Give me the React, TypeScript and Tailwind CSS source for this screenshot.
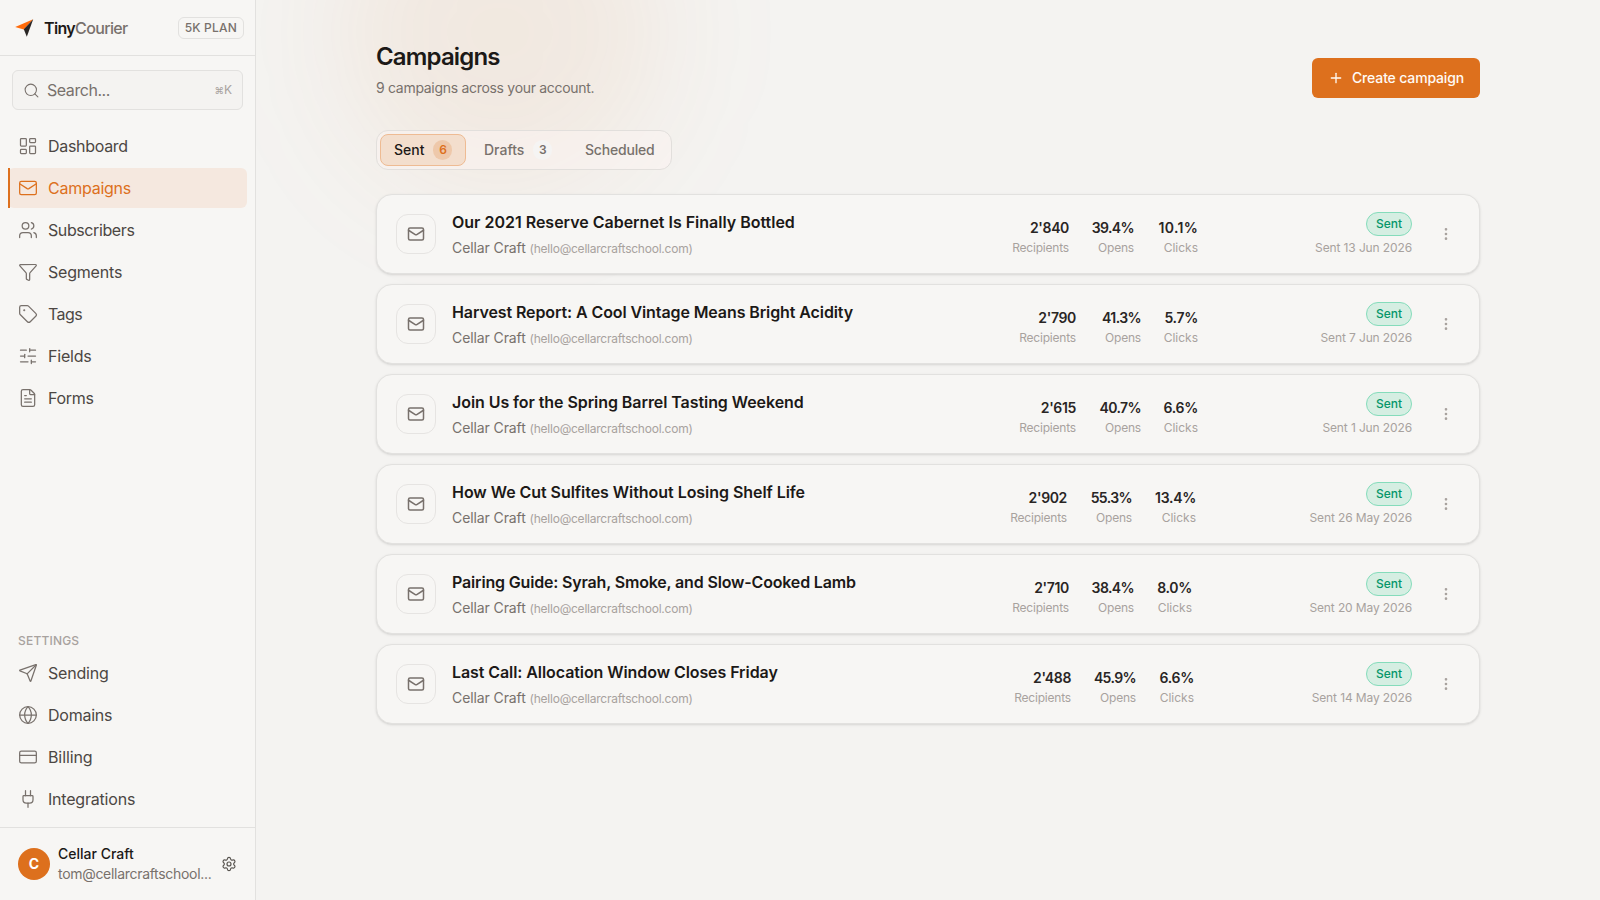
import {
  CreditCard,
  EllipsisVertical,
  FileText,
  Funnel,
  Globe,
  LayoutDashboard,
  Mail,
  Plug,
  Plus,
  Search,
  Send,
  Settings,
  SlidersHorizontal,
  Tag,
  Users,
  type LucideIcon,
} from "lucide-react";
import clsx from "clsx";

type NavEntry = {
  label: string;
  icon: LucideIcon;
  tracking: string;
  active?: boolean;
};

const mainNav: NavEntry[] = [
  { label: "Dashboard", icon: LayoutDashboard, tracking: "tracking-[-0.3px]" },
  { label: "Campaigns", icon: Mail, tracking: "tracking-[-0.25px]", active: true },
  { label: "Subscribers", icon: Users, tracking: "tracking-[-0.4px]" },
  { label: "Segments", icon: Funnel, tracking: "tracking-[-0.2px]" },
  { label: "Tags", icon: Tag, tracking: "tracking-[-0.6px]" },
  { label: "Fields", icon: SlidersHorizontal, tracking: "tracking-[-0.2px]" },
  { label: "Forms", icon: FileText, tracking: "tracking-[-0.3px]" },
];

const settingsNav: NavEntry[] = [
  { label: "Sending", icon: Send, tracking: "tracking-[-0.2px]" },
  { label: "Domains", icon: Globe, tracking: "tracking-[-0.25px]" },
  { label: "Billing", icon: CreditCard, tracking: "tracking-[-0.1px]" },
  { label: "Integrations", icon: Plug, tracking: "tracking-[-0.2px]" },
];

// clicksWidth and gap are in px; gap is the room between the stats and the status column
const campaigns = [
  { title: "Our 2021 Reserve Cabernet Is Finally Bottled", tracking: "tracking-[-0.01px]", recipients: "2'840", opens: "39.4%", clicks: "10.1%", clicksWidth: 40, gap: 104, date: "Sent 13 Jun 2026" },
  { title: "Harvest Report: A Cool Vintage Means Bright Acidity", tracking: "tracking-[-0.1px]", recipients: "2'790", opens: "41.3%", clicks: "5.7%", clicksWidth: 33, gap: 104, date: "Sent 7 Jun 2026" },
  { title: "Join Us for the Spring Barrel Tasting Weekend", tracking: "tracking-[-0.07px]", recipients: "2'615", opens: "40.7%", clicks: "6.6%", clicksWidth: 33, gap: 104, date: "Sent 1 Jun 2026" },
  { title: "How We Cut Sulfites Without Losing Shelf Life", tracking: "tracking-[-0.05px]", recipients: "2'902", opens: "55.3%", clicks: "13.4%", clicksWidth: 40, gap: 106, date: "Sent 26 May 2026" },
  { title: "Pairing Guide: Syrah, Smoke, and Slow-Cooked Lamb", tracking: "tracking-[-0.17px]", recipients: "2'710", opens: "38.4%", clicks: "8.0%", clicksWidth: 34, gap: 110, date: "Sent 20 May 2026" },
  { title: "Last Call: Allocation Window Closes Friday", tracking: "tracking-[-0.08px]", recipients: "2'488", opens: "45.9%", clicks: "6.6%", clicksWidth: 34, gap: 108, date: "Sent 14 May 2026" },
];

const NavItem = ({ label, icon: Icon, tracking, active }: NavEntry) => (
  <a
    className={clsx(
      "relative flex h-10 items-center gap-2.5 rounded-md pl-2.5",
      active ? "bg-[#f5e8df] text-[#dd701d]" : "text-[#4c4743]"
    )}
  >
    {active && <span className="absolute inset-y-0 left-0 w-0.5 bg-[#dd701d]" />}
    <Icon size={20} strokeWidth={1.5} className={active ? "text-[#dd701d]" : "text-[#78716c]"} />
    <span className={clsx("text-base leading-6", tracking)}>{label}</span>
  </a>
);

const Logo = () => (
  <svg width="20" height="20" viewBox="0 0 20 20">
    <path d="M19.2 1.2 L1.2 9.1 L9.8 11.4 Z" fill="#ff6b0a" />
    <path d="M19.2 1.2 L9.8 11.2 L12.8 18.8 Z" fill="#292524" />
  </svg>
);

const Sidebar = () => (
  <aside className="flex w-64 shrink-0 flex-col border-r border-[#e2e1df] bg-[#f7f6f4]">
    <div className="flex h-14 items-center border-b border-[#e2e1df] pr-[11px] pl-3.5">
      <Logo />
      <span className="ml-2.5 text-base font-semibold tracking-[-0.65px] text-[#1c1917]">
        Tiny<span className="font-medium text-[#78716c]">Courier</span>
      </span>
      <span className="ml-auto flex h-[22px] items-center rounded-md border border-[#e2e1df] px-1.5 text-xs font-medium tracking-[0.2px] whitespace-nowrap text-[#78716c]">
        5K PLAN
      </span>
    </div>

    <div className="px-3 pt-3.5">
      <div className="flex h-10 items-center rounded-md border border-[#e2e1df] bg-[#f4f3f1] px-2.5">
        <Search size={17} strokeWidth={1.5} className="text-[#78716c]" />
        <span className="ml-[7px] text-base tracking-[-0.45px] text-[#78716c]">Search...</span>
        <span className="ml-auto text-xs text-[#a8a29e]">
          <span className="text-[9.5px]">⌘</span>K
        </span>
      </div>
    </div>

    <nav className="flex flex-1 flex-col px-2 pt-4 pb-2">
      <div className="flex flex-col gap-0.5">
        {mainNav.map((item) => (
          <NavItem key={item.label} {...item} />
        ))}
      </div>
      <div className="mt-auto flex flex-col gap-0.5">
        <p className="px-2.5 pb-0.5 text-xs leading-4 font-medium tracking-[0.2px] text-[#a8a29e]">SETTINGS</p>
        {settingsNav.map((item) => (
          <NavItem key={item.label} {...item} />
        ))}
      </div>
    </nav>

    <div className="flex h-[73px] items-center border-t border-[#e2e1df] px-[18px]">
      <div className="flex size-8 shrink-0 items-center justify-center rounded-full bg-[#dd701d] text-sm font-bold text-white">
        C
      </div>
      <div className="ml-2 w-[156px]">
        <p className="text-sm leading-5 font-medium text-[#1c1917]">Cellar Craft</p>
        <p className="text-sm leading-5 tracking-[-0.3px] whitespace-nowrap text-[#78716c]">tom@cellarcraftschool...</p>
      </div>
      <Settings size={16} strokeWidth={1.75} className="ml-[7px] shrink-0 text-[#57534e]" />
    </div>
  </aside>
);

const Tabs = () => (
  <div className="flex h-10 w-[296px] items-center rounded-xl border border-[#e2dfdc] bg-[#fbf3f2]/50 p-[3px] text-sm font-medium">
    <div className="flex h-8 w-[86px] items-center rounded-lg border border-[#eebb93] bg-[#f3decd] pl-[13px] text-[#1c1917]">
      Sent
      <span className="ml-[9px] flex h-5 w-[19px] items-center justify-center rounded-full bg-[#eec8aa] text-xs font-semibold text-[#dd701d]">6</span>
    </div>
    <div className="flex h-8 w-[86px] items-center pl-[18px] text-[#78716c]">
      Drafts
      <span className="ml-[9px] flex h-5 w-[19px] shrink-0 items-center justify-center rounded-full bg-[#f5f4f3] text-xs font-semibold">3</span>
    </div>
    <div className="pl-[33px] tracking-[-0.2px] text-[#78716c]">Scheduled</div>
  </div>
);

type StatProps = {
  value: string;
  label: string;
  width: number;
  valueTracking: string;
  labelTracking?: string;
};

const Stat = ({ value, label, width, valueTracking, labelTracking }: StatProps) => (
  <div className="flex min-w-0 flex-col items-end whitespace-nowrap" style={{ width }}>
    <span className={clsx("text-sm leading-5 font-semibold text-[#292524]", valueTracking)}>{value}</span>
    <span className={clsx("mt-px text-xs leading-[18px] text-[#a8a29e]", labelTracking)}>{label}</span>
  </div>
);

const CampaignRow = ({ campaign }: { campaign: (typeof campaigns)[number] }) => (
  <div className="flex h-20 items-center rounded-2xl border border-[#e2e1df] bg-[#f7f6f4] pr-[18px] pl-[19px] shadow-[0_1px_3px_rgba(0,0,0,0.1),0_1px_2px_-1px_rgba(0,0,0,0.1)]">
    <div className="flex size-10 shrink-0 items-center justify-center rounded-xl border border-[#e6e4e2]">
      <Mail size={18} strokeWidth={2} className="text-[#78716c]" />
    </div>
    <div className="ml-4 min-w-0 flex-1 pt-0.5 whitespace-nowrap">
      <h3 className={clsx("text-base leading-6 font-semibold text-[#1c1917]", campaign.tracking)}>{campaign.title}</h3>
      <p className="mt-0.5 text-sm leading-6 tracking-[-0.1px] text-[#78716c]">
        Cellar Craft <span className="text-xs tracking-[-0.23px] text-[#a8a29e]">(hello@cellarcraftschool.com)</span>
      </p>
    </div>
    <div className="flex shrink-0 gap-6 pt-[7px]" style={{ marginRight: campaign.gap }}>
      <Stat value={campaign.recipients} label="Recipients" width={57} valueTracking="tracking-[-0.35px]" labelTracking="tracking-[-0.2px]" />
      <Stat value={campaign.opens} label="Opens" width={41} valueTracking="tracking-[-0.6px]" labelTracking="tracking-[-0.2px]" />
      <Stat
        value={campaign.clicks}
        label="Clicks"
        width={campaign.clicksWidth}
        valueTracking={campaign.clicks === "10.1%" ? "tracking-[0.3px]" : "tracking-[-0.3px]"}
      />
    </div>
    <div className="flex w-[110px] shrink-0 flex-col items-end whitespace-nowrap">
      <span className="flex h-6 w-[46px] items-center justify-center rounded-full border border-[#85dcbb] bg-[#d5eee2] text-xs font-medium text-[#059669]">
        Sent
      </span>
      <span className="mt-1 text-xs leading-4 tracking-[-0.12px] text-[#a8a29e]">{campaign.date}</span>
    </div>
    <EllipsisVertical size={16} className="mr-[7px] ml-[26px] shrink-0 text-[#a8a29e]" />
  </div>
);

export default function App() {
  return (
    <div className="flex h-[900px] w-[1600px] overflow-hidden bg-[#f4f3f1] font-[Inter,sans-serif]">
      <Sidebar />
      <main className="relative flex-1 overflow-hidden">
        <div className="absolute -top-32 left-[84px] size-80 rounded-full bg-[#dd701d]/8 blur-[64px]" />
        <div className="relative mx-auto w-[1104px] pt-[41px]">
          <header className="flex items-center justify-between">
            <div>
              <h1 className="text-2xl leading-8 font-semibold tracking-[-0.85px] text-[#1c1917]">Campaigns</h1>
              <p className="mt-[5px] text-sm leading-5 tracking-[-0.3px] text-[#78716c]">9 campaigns across your account.</p>
            </div>
            <button className="mt-[17px] flex h-10 w-[168px] items-center rounded-md bg-[#dd701d] pl-4 text-sm font-medium whitespace-nowrap text-[#fffaf5]">
              <Plus size={16} strokeWidth={2} />
              <span className="ml-2 tracking-[-0.15px]">Create campaign</span>
            </button>
          </header>
          <div className="mt-8">
            <Tabs />
          </div>
          <div className="mt-6 flex flex-col gap-2.5">
            {campaigns.map((campaign) => (
              <CampaignRow key={campaign.title} campaign={campaign} />
            ))}
          </div>
        </div>
      </main>
    </div>
  );
}
